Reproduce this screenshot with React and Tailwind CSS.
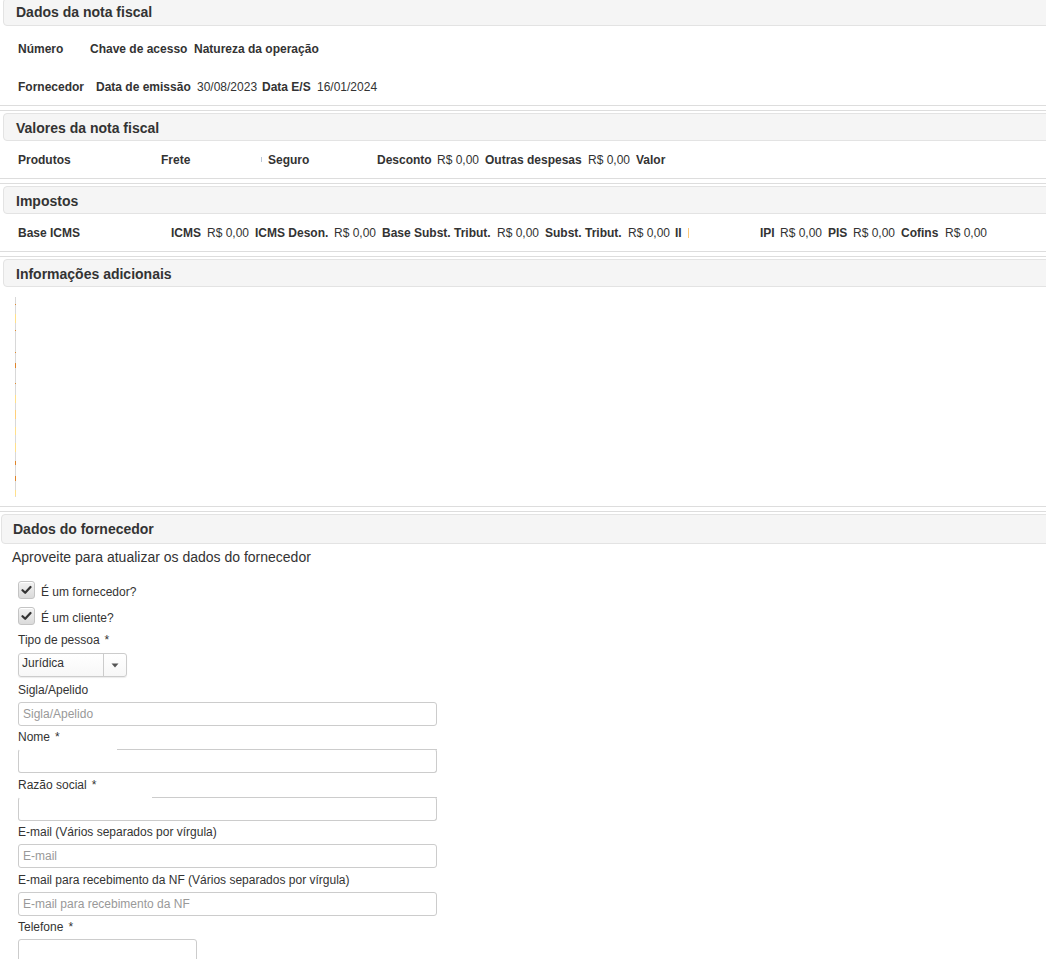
import React from 'react';

function Header({ children, className = '' }) {
  return (
    <div className={`flex h-[28px] items-center rounded-[4px] border border-[#e3e3e3] bg-[#f5f5f5] text-[14px] font-bold text-[#333] ${className}`}>
      {children}
    </div>
  );
}

function Cell({ w = '', bold, children }) {
  return (
    <span className={`shrink-0 whitespace-nowrap ${w} ${bold ? 'font-bold' : 'font-normal'}`}>{children}</span>
  );
}

function Check({ label }) {
  return (
    <div className="flex h-[18px] items-center">
      <div className="flex h-[18px] w-[17px] items-center justify-center rounded-[3px] border border-[#c4c4c4] bg-gradient-to-b from-[#f2f2f2] to-[#dadada] shadow-[inset_0_1px_0_#fff]">
        <svg width="11" height="10" viewBox="0 0 11 10">
          <path d="M1.5 5.2 L4.2 7.8 L9.5 2" fill="none" stroke="#333" strokeWidth="2.2" strokeLinecap="round" strokeLinejoin="round" />
        </svg>
      </div>
      <span className="ml-[6px] pt-[3px] text-[12px] text-[#333]">{label}</span>
    </div>
  );
}

function Label({ children, req, className = '' }) {
  return (
    <div className={`h-[16px] pt-[2px] text-[12px] leading-[14px] text-[#333] ${className}`}>
      {children}
      {req && <span className="ml-[5px]">*</span>}
    </div>
  );
}

function Field({ placeholder, className = 'w-[419px]', gapLeft }) {
  return (
    <div className={`relative mt-[5px] flex h-[24px] items-center rounded-[3px] border border-[#ccc] bg-white pl-[4px] text-[12px] text-[#999] ${gapLeft ? 'border-t-transparent' : ''} ${className}`}>
      {gapLeft && <span className={`absolute top-[-1px] right-[-1px] h-px bg-[#ccc] ${gapLeft}`} />}
      {placeholder}
    </div>
  );
}

export default function App() {
  const marks = [
    ['top-[7px] h-[1px]', 'bg-[#e08a2c]'],
    ['top-[17px] h-[9px]', 'bg-[#ffe08a]'],
    ['top-[33px] h-[1px]', 'bg-[#e08a2c]'],
    ['top-[55px] h-[1px]', 'bg-[#e08a2c]'],
    ['top-[66px] h-[5px]', 'bg-[#e0852a]'],
    ['top-[86px] h-[1px]', 'bg-[#e08a2c]'],
    ['top-[98px] h-[8px]', 'bg-[#ffe08a]'],
    ['top-[113px] h-[9px]', 'bg-[#ffcf7a]'],
    ['top-[130px] h-[8px]', 'bg-[#ffe08a]'],
    ['top-[146px] h-[9px]', 'bg-[#ffe08a]'],
    ['top-[164px] h-[4px]', 'bg-[#e0852a]'],
    ['top-[179px] h-[5px]', 'bg-[#e0852a]'],
    ['top-[193px] h-[6px]', 'bg-[#ffe08a]'],
  ];

  return (
    <div className="w-full overflow-hidden bg-white font-['Liberation_Sans',Arial,sans-serif] text-[#333]">
      <div className="w-[1070px]">
        {/* Dados da nota fiscal */}
        <div className="border-b border-[#ddd] px-[3px]">
          <Header className="-mt-[2px] pl-[12px]">Dados da nota fiscal</Header>
          <div className="pt-[3px] text-[12px]">
            <div className="flex h-[38px] items-center pl-[15px] pt-[2px]">
              <Cell w="w-[72px]" bold>Número</Cell>
              <Cell w="w-[104px]" bold>Chave de acesso</Cell>
              <Cell bold>Natureza da operação</Cell>
            </div>
            <div className="flex h-[38px] items-center pl-[15px] pt-[2px]">
              <Cell w="w-[78px]" bold>Fornecedor</Cell>
              <Cell w="w-[101px]" bold>Data de emissão</Cell>
              <Cell w="w-[65px]">30/08/2023</Cell>
              <Cell w="w-[55px]" bold>Data E/S</Cell>
              <Cell>16/01/2024</Cell>
            </div>
          </div>
        </div>

        {/* Valores */}
        <div className="mt-[4px] border-y border-[#ddd] px-[3px] pt-[2px]">
          <Header className="pl-[12px] pt-[2px]">Valores da nota fiscal</Header>
          <div className="flex h-[37px] items-center pl-[15px] text-[12px]">
            <Cell w="w-[143px]" bold>Produtos</Cell>
            <Cell w="w-[100px]" bold>Frete</Cell>
            <span className="w-[7px] shrink-0"><span className="block h-[5px] w-px bg-[#b9c6d6]" /></span>
            <Cell w="w-[109px]" bold>Seguro</Cell>
            <Cell w="w-[60px]" bold>Desconto</Cell>
            <Cell w="w-[48px]">R$ 0,00</Cell>
            <Cell w="w-[103px]" bold>Outras despesas</Cell>
            <Cell w="w-[48px]">R$ 0,00</Cell>
            <Cell bold>Valor</Cell>
          </div>
        </div>

        {/* Impostos */}
        <div className="mt-[4px] border-y border-[#ddd] px-[3px] pt-[2px]">
          <Header className="pl-[12px] pt-[2px]">Impostos</Header>
          <div className="flex h-[37px] items-center pl-[15px] text-[12px]">
            <Cell w="w-[153px]" bold>Base ICMS</Cell>
            <Cell w="w-[36px]" bold>ICMS</Cell>
            <Cell w="w-[48px]">R$ 0,00</Cell>
            <Cell w="w-[79px]" bold>ICMS Deson.</Cell>
            <Cell w="w-[48px]">R$ 0,00</Cell>
            <Cell w="w-[115px]" bold>Base Subst. Tribut.</Cell>
            <Cell w="w-[48px]">R$ 0,00</Cell>
            <Cell w="w-[83px]" bold>Subst. Tribut.</Cell>
            <Cell w="w-[47px]">R$ 0,00</Cell>
            <Cell w="w-[13px]" bold>II</Cell>
            <span className="w-[72px] shrink-0"><span className="block h-[10px] w-px bg-[#ffc978]" /></span>
            <Cell w="w-[20px]" bold>IPI</Cell>
            <Cell w="w-[48px]">R$ 0,00</Cell>
            <Cell w="w-[25px]" bold>PIS</Cell>
            <Cell w="w-[48px]">R$ 0,00</Cell>
            <Cell w="w-[44px]" bold>Cofins</Cell>
            <Cell>R$ 0,00</Cell>
          </div>
        </div>

        {/* Informações adicionais */}
        <div className="mt-[4px] border-y border-[#ddd] px-[3px] pt-[2px]">
          <Header className="pl-[12px] pt-[2px]">Informações adicionais</Header>
          <div className="h-[219px] pt-[10px]">
            <div className="relative ml-[12px] h-[200px] w-px bg-[#d8d8d8]">
              {marks.map(([pos, color], i) => (
                <span key={i} className={`absolute left-0 w-px ${pos} ${color}`} />
              ))}
            </div>
          </div>
        </div>

        {/* Dados do fornecedor */}
        <div className="mt-[4px] border-t border-[#ddd] pt-[2px]">
          <Header className="ml-[1px] h-[30px] pl-[11px]">Dados do fornecedor</Header>
          <p className="mt-[3px] pl-[12px] text-[14px] leading-[20px] text-[#333]">Aproveite para atualizar os dados do fornecedor</p>
          <div className="pl-[18px]">
            <div className="mt-[14px]"><Check label="É um fornecedor?" /></div>
            <div className="mt-[8px]"><Check label="É um cliente?" /></div>
            <Label req className="mt-[6px]">Tipo de pessoa</Label>
            <div className="mt-[6px] flex h-[24px] w-[109px] rounded-[3px] border border-[#ccc] bg-gradient-to-b from-white to-[#f7f7f7] shadow-[0_1px_1px_rgba(0,0,0,0.08)]">
              <div className="flex-1 pl-[3px] pt-[1px] text-[12px] leading-[16px] text-[#333]">Jurídica</div>
              <div className="flex w-[23px] items-center justify-center border-l border-[#ccc]">
                <svg width="8" height="5" viewBox="0 0 8 5"><path d="M0.5 0.5 L7.5 0.5 L4 4.5 Z" fill="#555" /></svg>
              </div>
            </div>
            <Label className="mt-[4px]">Sigla/Apelido</Label>
            <Field placeholder="Sigla/Apelido" />
            <Label req className="mt-[2px]">Nome</Label>
            <Field gapLeft="left-[98px]" />
            <Label req className="mt-[3px]">Razão social</Label>
            <Field gapLeft="left-[133px]" />
            <Label className="mt-[2px]">E-mail (Vários separados por vírgula)</Label>
            <Field placeholder="E-mail" />
            <Label className="mt-[3px]">E-mail para recebimento da NF (Vários separados por vírgula)</Label>
            <Field placeholder="E-mail para recebimento da NF" />
            <Label req className="mt-[2px]">Telefone</Label>
            <Field className="w-[179px]" />
          </div>
        </div>
      </div>
    </div>
  );
}
